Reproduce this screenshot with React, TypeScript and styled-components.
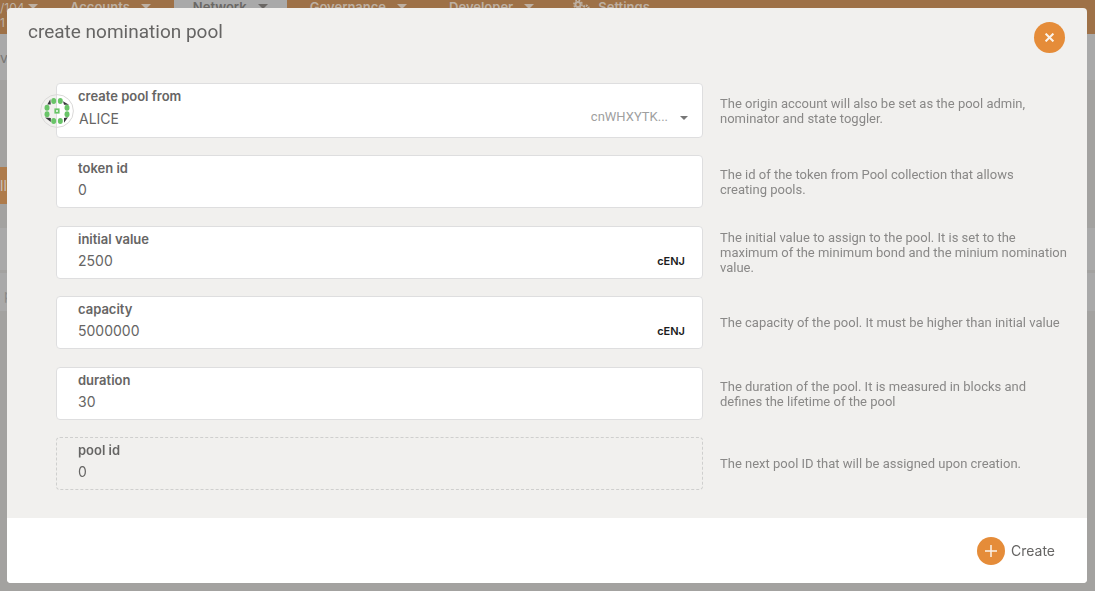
import React, { useId, useState } from "react";
import styled, { createGlobalStyle } from "styled-components";

const GlobalStyle = createGlobalStyle`
  *, *::before, *::after { box-sizing: border-box; }
  body {
    margin: 0;
    overflow: hidden;
    background: #a3a2a0;
    color: #666564;
    font-family: Inter, "Liberation Sans", sans-serif;
    font-size: 14px;
  }
  input, select, button { font: inherit; color: inherit; }
`;

/* ---------- page behind the dialog ---------- */

const Page = styled.div`
  min-height: 100vh;
`;

const TopBar = styled.header`
  display: flex;
  height: 34px;
  background: #9e7147;
  color: #bdb0a3;
  font-size: 13px;
  font-weight: 600;
  line-height: 15px;
`;

const ChainInfo = styled.div`
  display: flex;
  gap: 3px;
  width: 51px;
  font-size: 12px;
  font-weight: 400;
`;

const Menu = styled.nav`
  display: flex;
  gap: 4px;
`;

const MenuItem = styled.a<{ $active?: boolean }>`
  display: flex;
  gap: 11px;
  padding: 0 19px;
  text-decoration: none;
  color: ${(p) => (p.$active ? "#6a6764" : "inherit")};
  background: ${(p) => (p.$active ? "#a9a9a9" : "transparent")};
`;

const SettingsItem = styled(MenuItem)`
  gap: 8px;
  padding-left: 16px;
`;

const MenuCaret = styled.span`
  width: 0;
  height: 0;
  margin-top: 4px;
  border: 5px solid transparent;
  border-top-color: currentColor;
  border-bottom: 0;
`;

const TabBar = styled.div`
  height: 46px;
  padding-top: 16px;
  overflow: hidden;
  background: #a9a9a9;
  color: #777674;
  line-height: 16px;
`;

const FilterBar = styled.div`
  display: flex;
  padding: 87px 0 24px;
`;

const FilterButton = styled.button`
  width: 24px;
  height: 37px;
  padding: 0;
  border: 0;
  background: #ae7b4b;
  color: #c9c2bb;
  text-align: left;
`;

const ListRow = styled.div`
  height: 42px;
  margin-bottom: 3px;
  padding: 14px 4px;
  background: #a9a9a9;
  color: #8a8988;
  line-height: 16px;

  & + & { height: 38px; }
`;

/* ---------- dialog ---------- */

const Backdrop = styled.div`
  position: fixed;
  inset: 0;
  padding: 8px 8px 8px 7px;
  overflow: auto;
`;

const Dialog = styled.section`
  overflow: hidden;
  border-radius: 4px;
  background: #f1f0ee;
`;

const DialogHeader = styled.div`
  display: flex;
  justify-content: space-between;
  align-items: flex-start;
  padding: 14px 22px 30px 21px;
`;

const Title = styled.h1`
  margin: 0;
  font-family: Roboto, Inter, sans-serif;
  font-size: 19px;
  font-weight: 400;
  line-height: 19px;
`;

const CloseButton = styled.button`
  display: grid;
  place-items: center;
  width: 31px;
  height: 31px;
  padding: 0;
  border: 0;
  border-radius: 50%;
  background: #e58c39;
  color: #fbf3ea;
  cursor: pointer;
`;

const Form = styled.form`
  padding: 0 18px 28px 49px;
`;

const Row = styled.div`
  display: grid;
  grid-template-columns: minmax(0, 647fr) minmax(0, 349fr);
  column-gap: 17px;
  align-items: center;
  margin-bottom: 17px;

  &:nth-child(even) { margin-bottom: 18px; }
  &:last-child { margin-bottom: 0; }
`;

const Field = styled.div<{ $readOnly?: boolean; $tall?: boolean }>`
  position: relative;
  padding: 5px 17px ${(p) => (p.$tall ? 8 : 6)}px 21px;
  border: 1px ${(p) => (p.$readOnly ? "dashed #cfcfce" : "solid #dededf")};
  border-radius: 4px;
  background: ${(p) => (p.$readOnly ? "transparent" : "#fff")};
`;

const Label = styled.label`
  display: block;
  font-size: 13px;
  font-weight: 600;
  line-height: 15px;
`;

const Control = styled.div`
  display: flex;
  align-items: center;
  height: 25px;
  padding-top: 2px;
`;

const ValueInput = styled.input`
  flex: 1;
  min-width: 0;
  padding: 0;
  border: 0;
  outline: 0;
  background: transparent;
  line-height: 20px;
`;

const AccountSelect = styled.select`
  flex: 1;
  min-width: 0;
  padding: 2px 0 0 1px;
  border: 0;
  outline: 0;
  appearance: none;
  background: transparent;
  line-height: 20px;
`;

const Address = styled.span`
  margin-right: 12px;
  padding-bottom: 2px;
  color: #a09f9f;
  font-family: Roboto, Inter, sans-serif;
  font-size: 13px;
`;

const SelectCaret = styled.span`
  width: 0;
  height: 0;
  margin-right: -3px;
  border: 4px solid transparent;
  border-top-color: #777;
  border-bottom: 0;
`;

const Unit = styled.span`
  padding-top: 1px;
  color: #1b1c1d;
  font-size: 11px;
  font-weight: 600;
`;

const Help = styled.p`
  margin: 0;
  color: #898887;
  font-family: Roboto, Inter, sans-serif;
  font-size: 13px;
  line-height: 15px;
  white-space: pre-line;
`;

const Avatar = styled.svg`
  position: absolute;
  top: 10px;
  left: -17px;
  width: 34px;
  height: 34px;
`;

const DialogFooter = styled.div`
  display: flex;
  justify-content: flex-end;
  padding: 18px 32px;
  background: #fff;
`;

const CreateButton = styled.button`
  display: flex;
  align-items: center;
  gap: 6px;
  height: 29px;
  padding: 0;
  border: 0;
  background: transparent;
  cursor: pointer;
`;

const PlusBadge = styled.span`
  display: grid;
  place-items: center;
  width: 28px;
  height: 28px;
  border-radius: 50%;
  background: #e58c39;
`;

const dots = [
  [13.7, 7], [20.3, 7], [13.7, 27], [20.3, 27],
  [7, 13.7], [7, 20.3], [27, 13.7], [27, 20.3],
];

const Identicon = () => (
  <Avatar viewBox="0 0 34 34" aria-hidden="true">
    <circle cx="17" cy="17" r="16.4" fill="none" stroke="#dad9d8" />
    <path
      d="M7.3 10.6L10.3 5.3L10.8 10.6ZM23 7.3L29 10.8L24 10.8ZM5 23.4L10.8 24L10.8 28ZM24 28.8L24 24L28 23.3Z"
      fill="#37373b"
    />
    {dots.map(([x, y]) => (
      <ellipse key={`${x}-${y}`} cx={x} cy={y} rx="2.5" ry="3" fill="#69c468" />
    ))}
    <rect x="15.2" y="15.2" width="3.6" height="3.6" fill="#d6efd5" stroke="#69c468" strokeWidth="1.6" />
  </Avatar>
);

interface TextRowProps {
  label: string;
  initial: string;
  help: string;
  unit?: string;
  readOnly?: boolean;
}

const TextRow = ({ label, initial, help, unit, readOnly }: TextRowProps) => {
  const id = useId();
  const [value, setValue] = useState(initial);
  return (
    <Row>
      <Field $readOnly={readOnly}>
        <Label htmlFor={id}>{label}</Label>
        <Control>
          <ValueInput
            id={id}
            value={value}
            readOnly={readOnly}
            aria-describedby={`${id}-help`}
            onChange={(e) => setValue(e.target.value)}
          />
          {unit && <Unit>{unit}</Unit>}
        </Control>
      </Field>
      <Help id={`${id}-help`}>{help}</Help>
    </Row>
  );
};

const menu = ["Accounts", "Network", "Governance", "Developer"];

export default function App() {
  return (
    <>
      <GlobalStyle />
      <Page>
        <TopBar>
          <ChainInfo>
            <div>/104<br />1</div>
            <MenuCaret />
          </ChainInfo>
          <Menu>
            {menu.map((name) => (
              <MenuItem key={name} href="#" $active={name === "Network"}>
                {name}
                <MenuCaret />
              </MenuItem>
            ))}
            <SettingsItem href="#">
              <svg width="17" height="14" viewBox="0 0 17 14" aria-hidden="true">
                <circle cx="5" cy="4.5" r="2.6" fill="none" stroke="currentColor" strokeWidth="2" />
                <circle cx="5" cy="4.5" r="4.1" fill="none" stroke="currentColor" strokeWidth="1.6" strokeDasharray="1.7 1.52" />
                <circle cx="13" cy="8" r="2.4" fill="none" stroke="currentColor" strokeWidth="2.4" strokeDasharray="1.7 .8" />
              </svg>
              Settings
            </SettingsItem>
          </Menu>
        </TopBar>
        <TabBar>ve</TabBar>
        <FilterBar>
          <FilterButton type="button">ll</FilterButton>
        </FilterBar>
        <ListRow />
        <ListRow>p</ListRow>
      </Page>

      <Backdrop>
        <Dialog role="dialog" aria-labelledby="dialog-title">
          <DialogHeader>
            <Title id="dialog-title">create nomination pool</Title>
            <CloseButton type="button" aria-label="Close">
              <svg width="9" height="9" viewBox="0 0 9 9" stroke="currentColor" strokeWidth="2">
                <path d="M.6 .6L8.4 8.4M8.4 .6L.6 8.4" />
              </svg>
            </CloseButton>
          </DialogHeader>

          <Form id="create-pool" onSubmit={(e) => e.preventDefault()}>
            <Row>
              <Field $tall>
                <Identicon />
                <Label htmlFor="account">create pool from</Label>
                <Control>
                  <AccountSelect id="account">
                    <option>ALICE</option>
                  </AccountSelect>
                  <Address>cnWHXYTK...</Address>
                  <SelectCaret />
                </Control>
              </Field>
              <Help>The origin account will also be set as the pool admin, nominator and state toggler.</Help>
            </Row>
            <TextRow
              label="token id"
              initial="0"
              help={"The id of the token from Pool collection that allows\ncreating pools."}
            />
            <TextRow
              label="initial value"
              initial="2500"
              unit="cENJ"
              help="The initial value to assign to the pool. It is set to the maximum of the minimum bond and the minium nomination value."
            />
            <TextRow label="capacity" initial="5000000" unit="cENJ" help="The capacity of the pool. It must be higher than initial value" />
            <TextRow
              label="duration"
              initial="30"
              help="The duration of the pool. It is measured in blocks and defines the lifetime of the pool"
            />
            <TextRow label="pool id" initial="0" readOnly help="The next pool ID that will be assigned upon creation." />
          </Form>

          <DialogFooter>
            <CreateButton type="submit" form="create-pool">
              <PlusBadge>
                <svg width="12" height="12" viewBox="0 0 12 12" stroke="#fbf3ea" strokeWidth="1.5" aria-hidden="true">
                  <path d="M6 0V12M0 6H12" />
                </svg>
              </PlusBadge>
              Create
            </CreateButton>
          </DialogFooter>
        </Dialog>
      </Backdrop>
    </>
  );
}
